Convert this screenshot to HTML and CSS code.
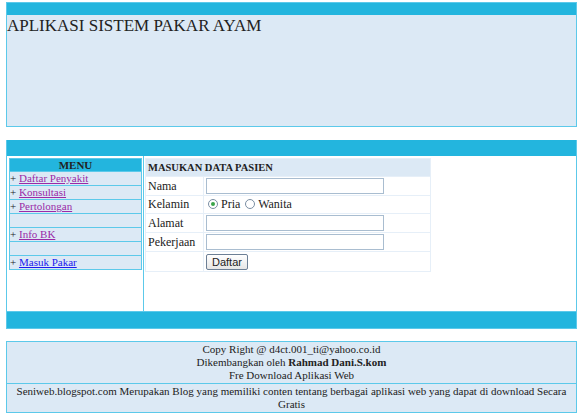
FILE: index.html
```html
<!DOCTYPE html>
<html>
<head>
<meta charset="utf-8">
<link rel="stylesheet" href="styles.css">
</head>
<body>
<div class="page">
  <div class="header">
    <div class="band"></div>
    <div class="title">APLIKASI SISTEM PAKAR AYAM</div>
  </div>
  <div class="main">
    <div class="band top"></div>
    <div class="content">
      <div class="side">
        <table class="menu">
          <tr><th>MENU</th></tr>
          <tr><td>+ <a class="visited" href="#">Daftar Penyakit</a></td></tr>
          <tr><td>+ <a class="visited" href="#">Konsultasi</a></td></tr>
          <tr><td>+ <a class="visited" href="#">Pertolongan</a></td></tr>
          <tr><td>&nbsp;</td></tr>
          <tr><td>+ <a class="visited" href="#">Info BK</a></td></tr>
          <tr><td>&nbsp;</td></tr>
          <tr><td>+ <a class="link" href="#">Masuk Pakar</a></td></tr>
        </table>
      </div>
      <div class="body">
        <table class="form">
          <tr><th colspan="2">MASUKAN DATA PASIEN</th></tr>
          <tr><td class="lbl">Nama</td><td><input class="txt" type="text"></td></tr>
          <tr><td class="lbl">Kelamin</td><td><label class="rad"><span class="dot on"></span> Pria</label> <label class="rad"><span class="dot"></span> Wanita</label></td></tr>
          <tr><td class="lbl">Alamat</td><td><input class="txt" type="text"></td></tr>
          <tr><td class="lbl">Pekerjaan</td><td><input class="txt" type="text"></td></tr>
          <tr><td class="lbl"></td><td><button class="btn" type="button">Daftar</button></td></tr>
        </table>
      </div>
    </div>
    <div class="band bottom"></div>
  </div>
  <div class="footer">
    <div class="frow">Copy Right @ d4ct.001_ti@yahoo.co.id<br>Dikembangkan oleh <b>Rahmad Dani.S.kom</b><br>Fre Download Aplikasi Web</div>
    <div class="frow last">Seniweb.blogspot.com Merupakan Blog yang memiliki conten tentang berbagai aplikasi web yang dapat di download Secara Gratis</div>
  </div>
</div>
</body>
</html>
```
FILE: styles.css
```css
html, body { margin: 0; padding: 0; background: #fff; }
body { font-family: "Liberation Serif", "Times New Roman", serif; font-size: 12px; color: #222; }
.page { margin: 2px 0 0 6px; width: 571px; }

.header { border: 1px solid #5cc9ea; background: #dce9f5; height: 123px; }
.band { background: #23b5de; }
.header .band { height: 12px; }
.title { font-size: 17px; line-height: 22px; padding-left: 0; color: #222; }

.main { margin-top: 13px; border: 1px solid #5cc9ea; border-top: none; }
.main .band.top { height: 16px; }
.main .band.bottom { height: 16px; border-top: 1px solid #5cc9ea; }
.content { display: flex; height: 155px; background: #fff; }
.side { width: 134px; border-right: 1px solid #5cc9ea; padding: 2px 0 0 2px; }
.body { flex: 1; padding: 2px 0 0 1px; }

.menu { border-collapse: collapse; width: 133px; border: 1px solid #5cc9ea; }
.menu th { background: #23b5de; font-size: 11px; font-weight: bold; height: 12px; padding: 0; line-height: 12px; border-bottom: 1px solid #5cc9ea; }
.menu td { background: #dce9f5; height: 13px; padding: 0; border-bottom: 1px solid #5cc9ea; font-size: 11px; line-height: 13px; }
a { color: #9a2aa7; }
a.link { color: #1a1aee; }

.form { border-collapse: collapse; width: 286px; font-size: 12px; }
.form th { background: #dce9f5; text-align: left; font-size: 10.5px; height: 17px; padding: 0 2px; border: 1px solid #e6eff8; }
.form td { border: 1px solid #e6eff8; padding: 0 2px; height: 17px; }
.form td.lbl { width: 53px; padding-left: 2px; }
.txt { width: 172px; height: 12px; border: 1px solid #a9bdd0; padding: 1px 2px; margin: 1px 0; display: block; font-size: 11px; }
.rad { margin-left: 2px; }
.dot { display: inline-block; width: 8px; height: 8px; border: 1px solid #7a8ea3; border-radius: 50%; vertical-align: -1px; position: relative; background: #fff; }
.dot.on::after { content: ""; position: absolute; left: 2px; top: 2px; width: 4px; height: 4px; border-radius: 50%; background: #3aa54a; }
.btn { font-family: "Liberation Sans", Arial, sans-serif; font-size: 11px; height: 16px; padding: 0 5px; margin: 2px 0 1px; border: 1px solid #6c7f95; border-radius: 2px; background: linear-gradient(#fff, #e6e6e6); color: #222; line-height: 13px; }

.footer { margin-top: 12px; border: 1px solid #5cc9ea; background: #dce9f5; text-align: center; font-size: 11px; line-height: 13px; }
.frow { padding: 1px 4px; }
.frow + .frow { border-top: 1px solid #5cc9ea; }
```
